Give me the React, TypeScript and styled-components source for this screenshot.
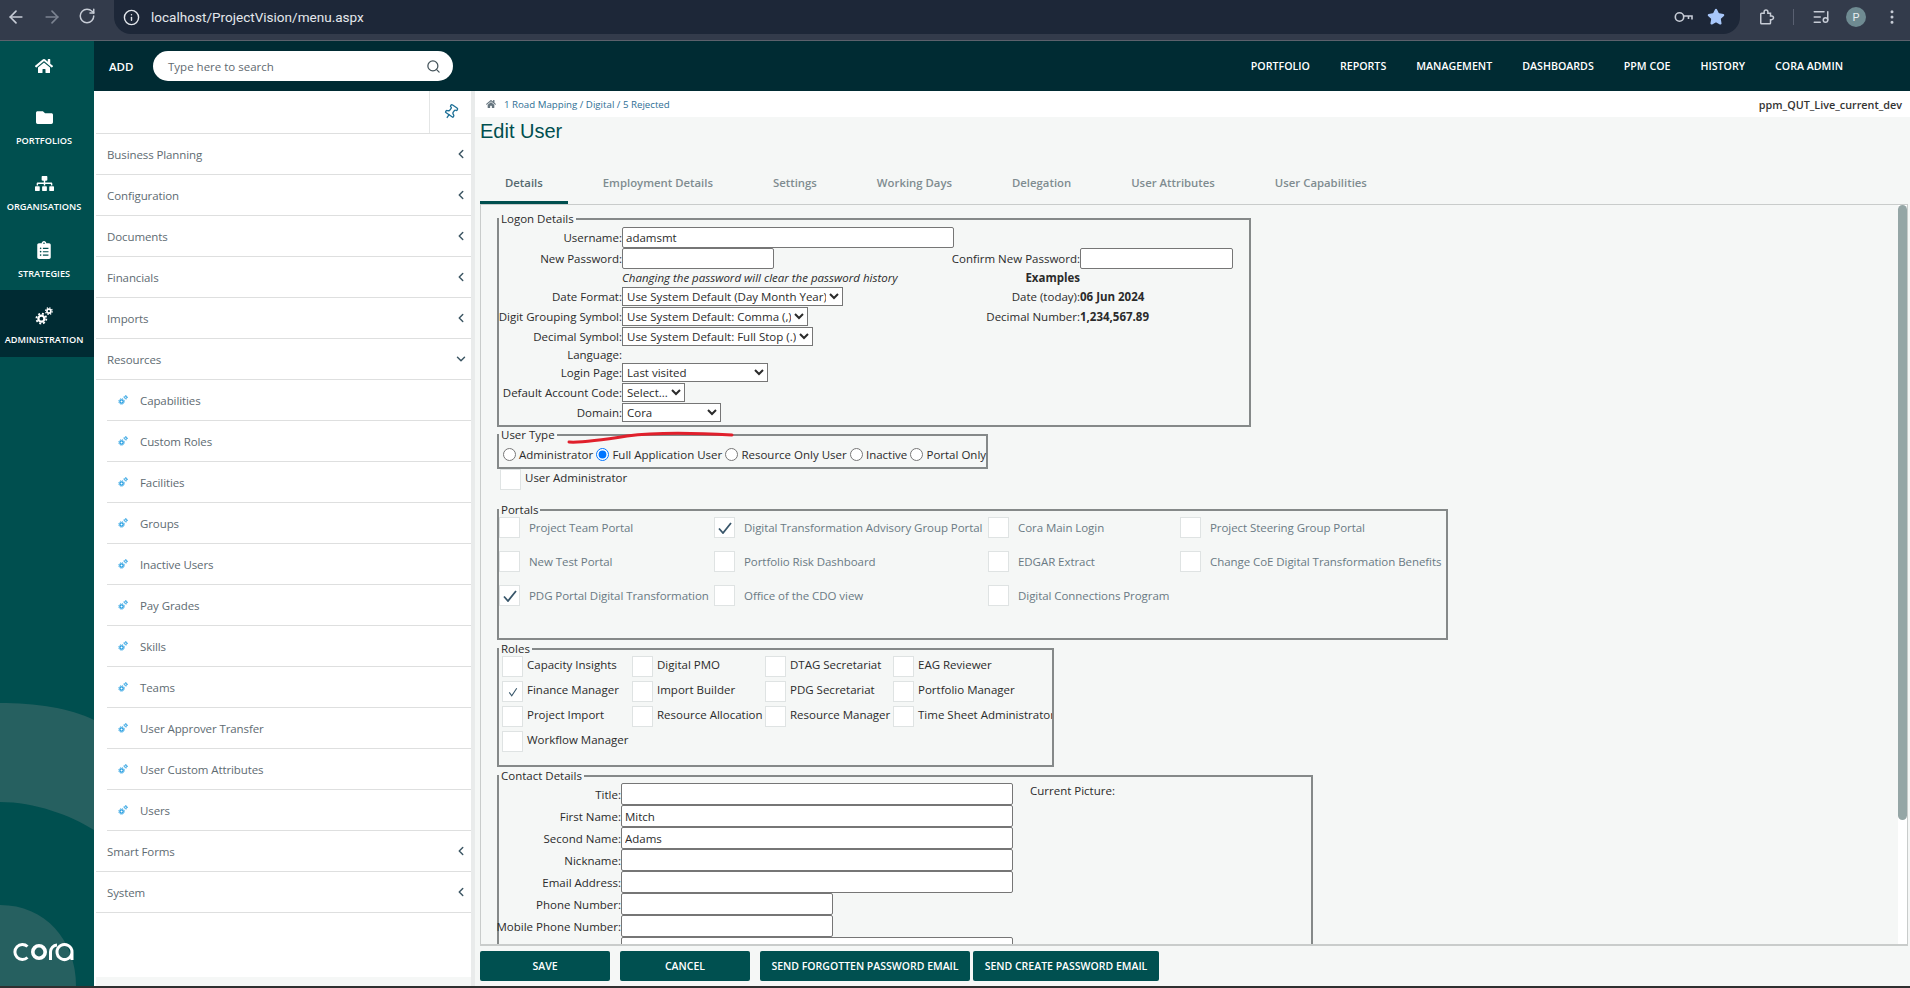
import React from "react";
import styled, { createGlobalStyle } from "styled-components";
import {
  ArrowLeft,
  ArrowRight,
  RotateCw,
  Info,
  Star,
  ListMusic,
  EllipsisVertical,
  Search,
  Pin,
  ChevronLeft,
  ChevronDown,
} from "lucide-react";
import { FaHome, FaFolder, FaSitemap, FaClipboardList } from "react-icons/fa";

const UI = `"Open Sans", "Noto Sans", sans-serif`;

const Global = createGlobalStyle`
  html, body { margin: 0; padding: 0; width: 1910px; height: 988px; overflow: hidden; background: #2f3030; }
  body { font-family: ${UI}; }
  * { box-sizing: border-box; }
`;

const Page = styled.div`
  width: 1910px;
  height: 988px;
  display: flex;
  flex-direction: column;
  overflow: hidden;
`;

/* ---------- browser chrome ---------- */
const ChromeBar = styled.div`
  height: 41px;
  flex: none;
  display: flex;
  align-items: flex-start;
  background: #333b4b;
  border-bottom: 1px solid #5c616c;
  color: #c7ccd6;
`;
const NavButtons = styled.div`
  display: flex;
  gap: 16px;
  padding: 7px 0 0 6px;
  width: 114px;
  flex: none;
`;
const NavIcon = styled.span<{ $dim?: boolean }>`
  display: flex;
  width: 20px;
  height: 20px;
  color: ${(p) => (p.$dim ? "#7c8391" : "#c7ccd6")};
`;
const UrlBar = styled.div`
  width: 1626px;
  flex: none;
  height: 34px;
  background: #1d2738;
  border-radius: 0 0 17px 17px;
  display: flex;
  align-items: center;
  padding: 0 15px 0 9px;
`;
const UrlText = styled.span`
  margin-left: 11px;
  flex: 1;
  font-family: Roboto, sans-serif;
  font-size: 13.55px;
  color: #e4e7ec;
`;
const UrlActions = styled.div`
  display: flex;
  align-items: center;
  gap: 14px;
`;
const ChromeTools = styled.div`
  flex: 1;
  min-width: 0;
  height: 34px;
  display: flex;
  align-items: center;
  padding-left: 17px;
`;
const ToolDivider = styled.span`
  width: 1px;
  height: 16px;
  background: #596071;
  margin: 0 18px;
`;
const Avatar = styled.span`
  width: 20px;
  height: 20px;
  flex: none;
  border-radius: 50%;
  background: #6f8b92;
  color: #e8eef0;
  font-family: Roboto, sans-serif;
  font-size: 11px;
  display: flex;
  align-items: center;
  justify-content: center;
  margin: 0 17px 0 16px;
`;

const Shell = styled.div`
  height: 945px;
  flex: none;
  display: flex;
`;

/* ---------- left rail ---------- */
const Rail = styled.nav`
  width: 94px;
  flex: none;
  position: relative;
  background: #004f4f;
  display: flex;
  flex-direction: column;
  overflow: hidden;
`;
const RailArt = styled.svg`
  position: absolute;
  left: 0;
  top: 0;
`;
const RailHome = styled.div`
  position: relative;
  height: 50px;
  display: flex;
  align-items: center;
  justify-content: center;
  padding: 0 6px 1px 0;
  color: #fff;
`;
const RailItem = styled.div<{ $active?: boolean }>`
  position: relative;
  height: 66.4px;
  display: flex;
  flex-direction: column;
  align-items: center;
  padding: 16px 6px 0 0;
  background: ${(p) => (p.$active ? "#002b33" : "transparent")};
  color: #fff;
`;
const RailIconBox = styled.span`
  height: 20px;
  display: flex;
  align-items: center;
  justify-content: center;
`;
const RailLabel = styled.span`
  margin-top: 8px;
  font-size: 9.2px;
  line-height: 12px;
  font-weight: 600;
  white-space: nowrap;
  color: #fff;
`;
const LogoMark = styled.svg`
  position: absolute;
  left: 13px;
  top: 901px;
`;

/* ---------- right column ---------- */
const Column = styled.div`
  flex: 1;
  display: flex;
  flex-direction: column;
  min-width: 0;
`;
const TopBar = styled.header`
  height: 50px;
  flex: none;
  background: #002b33;
  display: flex;
  align-items: center;
  padding: 0 67px 0 15px;
  color: #fff;
`;
const AddLabel = styled.span`
  font-size: 11.5px;
  font-weight: 600;
  width: 44px;
`;
const SearchBox = styled.div`
  width: 300px;
  height: 30px;
  border-radius: 15px;
  background: #fff;
  display: flex;
  align-items: center;
  justify-content: space-between;
  padding: 0 12px 0 15px;
  font-size: 11.5px;
  color: #5f6a70;
`;
const TopNav = styled.div`
  margin-left: auto;
  display: flex;
  gap: 30px;
  font-size: 10.65px;
  font-weight: 600;
`;
const Body = styled.div`
  flex: 1;
  display: flex;
  min-height: 0;
`;

/* ---------- sidebar ---------- */
const Sidebar = styled.aside`
  width: 377px;
  flex: none;
  background: #fff;
  padding-left: 2px;
  display: flex;
  flex-direction: column;
`;
const SideHead = styled.div`
  height: 43px;
  flex: none;
  display: flex;
  justify-content: flex-end;
  border-bottom: 1px solid #dedfdf;
`;
const PinCell = styled.div`
  width: 42px;
  border-left: 1px solid #e4e6e6;
  display: flex;
  align-items: center;
  justify-content: center;
  color: #1d6f96;
`;
const TiltedPin = styled(Pin)`
  transform: rotate(35deg);
`;
const SideRow = styled.div<{ $sub?: boolean }>`
  height: 41px;
  flex: none;
  margin-left: ${(p) => (p.$sub ? "11px" : "0")};
  padding: 0 3px 0 11px;
  display: flex;
  align-items: center;
  border-bottom: 1px solid #dedfdf;
  font-size: 11.5px;
  letter-spacing: -0.1px;
  color: #5e6b72;
`;
const SubIcon = styled.span`
  width: 10px;
  height: 10px;
  margin-right: 12px;
  display: flex;
  color: #1f9be0;
`;
const RowText = styled.span`
  flex: 1;
`;
const RowChevron = styled.span`
  width: 14px;
  display: flex;
  color: #3c5663;
`;
const SideFoot = styled.div`
  margin-top: auto;
  height: 9px;
  background: #f5f7f6;
`;
const Splitter = styled.div`
  width: 4px;
  flex: none;
  background: #e9ebeb;
`;

/* ---------- main ---------- */
const Main = styled.main`
  flex: 1;
  min-width: 0;
  background: #f5f7f6;
  display: flex;
  flex-direction: column;
`;
const CrumbBar = styled.div`
  height: 26px;
  flex: none;
  background: #fff;
  display: flex;
  align-items: center;
  padding: 0 8px 0 11px;
  color: #66757f;
`;
const Crumbs = styled.span`
  margin-left: 8px;
  font-size: 9.7px;
  color: #2f6f95;
`;
const DbName = styled.span`
  margin-left: auto;
  font-size: 10.8px;
  font-weight: 600;
  color: #333;
`;
const Title = styled.h1`
  margin: 0;
  padding: 2px 0 0 5px;
  height: 46px;
  flex: none;
  font-family: "Liberation Sans", Arial, sans-serif;
  font-size: 20px;
  line-height: 24px;
  font-weight: 400;
  color: #004f4f;
`;
const TabBar = styled.div`
  height: 41px;
  flex: none;
  display: flex;
  gap: 10px;
  padding-left: 5px;
`;
const Tab = styled.div<{ $active?: boolean }>`
  padding: 0 25px;
  height: 41px;
  display: flex;
  align-items: center;
  font-size: 11.35px;
  font-weight: 600;
  white-space: nowrap;
  color: ${(p) => (p.$active ? "#55696f" : "#7f8c90")};
  border-bottom: 3px solid ${(p) => (p.$active ? "#004f4f" : "transparent")};
`;
const Panel = styled.section`
  height: 742px;
  flex: none;
  margin: 0 2px 0 5px;
  border: 1px solid #c9cccb;
  border-bottom-width: 2px;
  border-top-width: 1px;
  display: flex;
  min-height: 0;
`;
const FormScroll = styled.div`
  flex: 1;
  min-width: 0;
  overflow: hidden;
  padding: 6px 0 0 16px;
  font-size: 11.5px;
  color: #2b2b2b;
`;
const Track = styled.div`
  width: 9px;
  flex: none;
  background: #fff;
`;
const Thumb = styled.div`
  height: 615px;
  background: #95a6a6;
  border-radius: 5px;
`;

const Group = styled.fieldset<{ $w: number }>`
  position: relative;
  width: ${(p) => p.$w}px;
  margin: 0;
  padding: 0;
  border: 2px solid #858989;
  min-width: 0;
`;
const GroupTitle = styled.legend`
  padding: 0 2px;
  margin-left: 0;
  font-size: 11.5px;
  line-height: 15px;
  color: #2b2b2b;
`;
const Scribble = styled.svg`
  position: absolute;
  left: 68px;
  top: -11px;
`;

const LogonGrid = styled.div`
  display: grid;
  grid-template-columns: 123px 332px 126px 153px;
  grid-template-rows: 22px 21px 17px 20px 20px 20px 16px 20px 20px 20px;
  padding-bottom: 3px;
  align-items: center;
`;
const Label = styled.label`
  justify-self: end;
  text-align: right;
  white-space: nowrap;
`;
const BoldLabel = styled(Label)`
  font-weight: 700;
`;
const Value = styled.span`
  font-weight: 700;
  white-space: nowrap;
`;
const Note = styled.span`
  font-style: italic;
  white-space: nowrap;
`;
const TextInput = styled.input<{ $w: number }>`
  display: block;
  width: ${(p) => p.$w}px;
  height: 21px;
  padding: 0 3px;
  border: 1px solid #767676;
  border-radius: 2px;
  background: #fff;
  font-family: ${UI};
  font-size: 11.5px;
  color: #2b2b2b;
  outline: none;
`;
const ContactInput = styled(TextInput)`
  height: 22px;
`;
const Select = styled.select<{ $w: number }>`
  display: block;
  width: ${(p) => p.$w}px;
  height: 19px;
  padding: 0;
  border: 1px solid #767676;
  border-radius: 0;
  background-color: #fff;
  font-family: ${UI};
  font-size: 11.5px;
  color: #2b2b2b;
`;

const RadioRow = styled.div`
  height: 25px;
  display: flex;
  align-items: center;
  padding-left: 4px;
  gap: 3.2px;
  white-space: nowrap;
`;
const RadioOption = styled.label`
  display: flex;
  align-items: center;
  gap: 3px;
`;
const Radio = styled.input`
  margin: 0;
  width: 13px;
  height: 13px;
`;

const Box = styled.span`
  width: 21px;
  height: 21px;
  flex: none;
  background: #fff;
  border: 1px solid #dfe3e3;
  display: flex;
  align-items: center;
  justify-content: center;
  color: #38566a;
`;
const StandaloneCheck = styled.div`
  height: 33px;
  padding-left: 3px;
  display: flex;
  gap: 4px;
  line-height: 17px;
`;
const PortalGrid = styled.div`
  display: grid;
  grid-template-columns: 215px 274px 192px 1fr;
  grid-auto-rows: 34px;
  height: 121px;
`;
const PortalItem = styled.div`
  display: flex;
  gap: 9px;
  line-height: 21px;
  letter-spacing: -0.06px;
  white-space: nowrap;
  color: #6a7a84;
`;
const RolesGrid = styled.div`
  display: grid;
  grid-template-columns: 130px 133px 128px 1fr;
  grid-auto-rows: 25px;
  padding-left: 3px;
  height: 109px;
`;
const RoleItem = styled.div`
  display: flex;
  gap: 4px;
  line-height: 17px;
  white-space: nowrap;
  overflow: hidden;
`;
const Stack = styled.div<{ $top: number }>`
  margin-top: ${(p) => p.$top}px;
`;
const ContactGrid = styled.div`
  display: grid;
  grid-template-columns: 122px 409px 1fr;
  grid-auto-rows: 22px;
  align-items: center;
`;
const PictureLabel = styled.span`
  align-self: start;
  line-height: 16px;
`;
const ButtonBar = styled.footer`
  flex: 1;
  display: flex;
  align-items: flex-start;
  gap: 10px;
  padding: 5px 0 0 5px;
`;
const ButtonPair = styled.div`
  display: flex;
  gap: 3px;
`;
const ActionButton = styled.button<{ $w: number }>`
  width: ${(p) => p.$w}px;
  height: 30px;
  border: 0;
  border-radius: 2px;
  padding: 0;
  background: #005050;
  color: #fff;
  font-family: ${UI};
  font-size: 10.5px;
  font-weight: 600;
  white-space: nowrap;
`;

const Gears = ({ size }: { size: number }) => (
  <svg width={size} height={size} viewBox="0 0 24 24" fill="none" stroke="currentColor">
    <circle cx="8.5" cy="15.5" r="4" strokeWidth="3" />
    <circle cx="8.5" cy="15.5" r="6.6" strokeWidth="2.4" strokeDasharray="2.6 2.58" />
    <circle cx="18.5" cy="5.5" r="2.6" strokeWidth="2.2" />
    <circle cx="18.5" cy="5.5" r="4.4" strokeWidth="1.8" strokeDasharray="1.75 1.71" />
  </svg>
);

const Tick = ({ small }: { small?: boolean }) =>
  small ? (
    <svg width="10" height="10" viewBox="0 0 12 12" fill="none" stroke="currentColor" strokeWidth="1.3">
      <path d="M1.5 6.5 4.5 10.5 10.5 1.5" />
    </svg>
  ) : (
    <svg width="14" height="12" viewBox="0 0 14 12" fill="none" stroke="currentColor" strokeWidth="1.8">
      <path d="M1 6.5 5 11 13 1" />
    </svg>
  );

const KeyIcon = () => (
  <svg width="19" height="12" viewBox="0 0 19 12" fill="none" stroke="#c7ccd6" strokeWidth="1.6">
    <circle cx="5.5" cy="6" r="4.2" />
    <path d="M9.7 5H18V8.5M14.5 5V8" />
  </svg>
);

const ExtensionIcon = () => (
  <svg width="18" height="18" viewBox="0 0 24 24" fill="none" stroke="#c7ccd6" strokeWidth="2">
    <path d="M6 7h3.5V5a2.5 2.5 0 0 1 5 0v2H18v3.5h1.5a2.5 2.5 0 0 1 0 5H18V20a1 1 0 0 1-1 1H6a1 1 0 0 1-1-1V8a1 1 0 0 1 1-1z" />
  </svg>
);

const topMenu = ["PORTFOLIO", "REPORTS", "MANAGEMENT", "DASHBOARDS", "PPM COE", "HISTORY", "CORA ADMIN"];
const groupsA = ["Business Planning", "Configuration", "Documents", "Financials", "Imports"];
const subs = [
  "Capabilities",
  "Custom Roles",
  "Facilities",
  "Groups",
  "Inactive Users",
  "Pay Grades",
  "Skills",
  "Teams",
  "User Approver Transfer",
  "User Custom Attributes",
  "Users",
];
const tabs = ["Details", "Employment Details", "Settings", "Working Days", "Delegation", "User Attributes", "User Capabilities"];
const portals: [string, boolean][] = [
  ["Project Team Portal", false],
  ["Digital Transformation Advisory Group Portal", true],
  ["Cora Main Login", false],
  ["Project Steering Group Portal", false],
  ["New Test Portal", false],
  ["Portfolio Risk Dashboard", false],
  ["EDGAR Extract", false],
  ["Change CoE Digital Transformation Benefits", false],
  ["PDG Portal Digital Transformation", true],
  ["Office of the CDO view", false],
  ["Digital Connections Program", false],
];
const roles: [string, boolean][] = [
  ["Capacity Insights", false],
  ["Digital PMO", false],
  ["DTAG Secretariat", false],
  ["EAG Reviewer", false],
  ["Finance Manager", true],
  ["Import Builder", false],
  ["PDG Secretariat", false],
  ["Portfolio Manager", false],
  ["Project Import", false],
  ["Resource Allocation", false],
  ["Resource Manager", false],
  ["Time Sheet Administrator", false],
  ["Workflow Manager", false],
];
const contacts: [string, string, number][] = [
  ["Title:", "", 392],
  ["First Name:", "Mitch", 392],
  ["Second Name:", "Adams", 392],
  ["Nickname:", "", 392],
  ["Email Address:", "", 392],
  ["Phone Number:", "", 212],
  ["Mobile Phone Number:", "", 212],
  ["Source Shield:", "", 392],
];
const userTypes = ["Administrator", "Full Application User", "Resource Only User", "Inactive", "Portal Only"];

const Picker = ({ w, value }: { w: number; value: string }) => (
  <Select $w={w} defaultValue={value}>
    <option>{value}</option>
  </Select>
);

export default function App() {
  return (
    <Page>
      <Global />
      <ChromeBar>
        <NavButtons>
          <NavIcon><ArrowLeft size={20} /></NavIcon>
          <NavIcon $dim><ArrowRight size={20} /></NavIcon>
          <NavIcon><RotateCw size={18} /></NavIcon>
        </NavButtons>
        <UrlBar>
          <Info size={17} color="#e4e7ec" />
          <UrlText>localhost/ProjectVision/menu.aspx</UrlText>
          <UrlActions>
            <KeyIcon />
            <Star size={18} color="#a8c7fa" fill="#a8c7fa" />
          </UrlActions>
        </UrlBar>
        <ChromeTools>
          <ExtensionIcon />
          <ToolDivider />
          <ListMusic size={18} />
          <Avatar>P</Avatar>
          <EllipsisVertical size={18} />
        </ChromeTools>
      </ChromeBar>

      <Shell>
        <Rail>
          <RailArt width="94" height="945" viewBox="0 0 94 945" aria-hidden="true">
            <path d="M0 662C35 662 70 667 94 679V789C70 774 35 761 0 761Z" fill="#266060" />
            <path d="M0 864C45 864 76 899 76 945H0Z" fill="#266060" />
          </RailArt>
          <RailHome><FaHome size={18} /></RailHome>
          <RailItem>
            <RailIconBox><FaFolder size={17} /></RailIconBox>
            <RailLabel>PORTFOLIOS</RailLabel>
          </RailItem>
          <RailItem>
            <RailIconBox><FaSitemap size={19} /></RailIconBox>
            <RailLabel>ORGANISATIONS</RailLabel>
          </RailItem>
          <RailItem>
            <RailIconBox><FaClipboardList size={18} /></RailIconBox>
            <RailLabel>STRATEGIES</RailLabel>
          </RailItem>
          <RailItem $active>
            <RailIconBox><Gears size={18} /></RailIconBox>
            <RailLabel>ADMINISTRATION</RailLabel>
          </RailItem>
          <LogoMark width="62" height="20" viewBox="0 0 62 20" fill="none" stroke="#fff" strokeWidth="3" role="img" aria-label="cora">
            <path d="M14.5 4.5A7.5 7.5 0 1 0 14.5 15.5" />
            <circle cx="26" cy="10" r="6.2" strokeWidth="3.6" />
            <path d="M37.5 18V10A7 7 0 0 1 44 3" />
            <path d="M59 10A7.5 7.5 0 1 0 59 10.1V18" />
          </LogoMark>
        </Rail>

        <Column>
          <TopBar>
            <AddLabel>ADD</AddLabel>
            <SearchBox>
              Type here to search
              <Search size={15} color="#44535a" />
            </SearchBox>
            <TopNav>
              {topMenu.map((m) => (
                <span key={m}>{m}</span>
              ))}
            </TopNav>
          </TopBar>
          <Body>
            <Sidebar>
              <SideHead>
                <PinCell><TiltedPin size={16} /></PinCell>
              </SideHead>
              {groupsA.map((g) => (
                <SideRow key={g}>
                  <RowText>{g}</RowText>
                  <RowChevron><ChevronLeft size={14} strokeWidth={2.5} /></RowChevron>
                </SideRow>
              ))}
              <SideRow>
                <RowText>Resources</RowText>
                <RowChevron><ChevronDown size={14} strokeWidth={2.5} /></RowChevron>
              </SideRow>
              {subs.map((s) => (
                <SideRow $sub key={s}>
                  <SubIcon><Gears size={10} /></SubIcon>
                  <RowText>{s}</RowText>
                </SideRow>
              ))}
              <SideRow>
                <RowText>Smart Forms</RowText>
                <RowChevron><ChevronLeft size={14} strokeWidth={2.5} /></RowChevron>
              </SideRow>
              <SideRow>
                <RowText>System</RowText>
                <RowChevron><ChevronLeft size={14} strokeWidth={2.5} /></RowChevron>
              </SideRow>
              <SideFoot />
            </Sidebar>
            <Splitter />
            <Main>
              <CrumbBar>
                <FaHome size={10} />
                <Crumbs>1 Road Mapping / Digital / 5 Rejected</Crumbs>
                <DbName>ppm_QUT_Live_current_dev</DbName>
              </CrumbBar>
              <Title>Edit User</Title>
              <TabBar>
                {tabs.map((t, i) => (
                  <Tab key={t} $active={i === 0}>{t}</Tab>
                ))}
              </TabBar>
              <Panel>
                <FormScroll>
                  <Group $w={754}>
                    <GroupTitle>Logon Details</GroupTitle>
                    <LogonGrid>
                      <Label>Username:</Label>
                      <TextInput $w={332} defaultValue="adamsmt" />
                      <span />
                      <span />
                      <Label>New Password:</Label>
                      <TextInput $w={152} />
                      <Label>Confirm New Password:</Label>
                      <TextInput $w={153} />
                      <span />
                      <Note>Changing the password will clear the password history</Note>
                      <BoldLabel>Examples</BoldLabel>
                      <span />
                      <Label>Date Format:</Label>
                      <Picker w={221} value="Use System Default (Day Month Year)" />
                      <Label>Date (today):</Label>
                      <Value>06 Jun 2024</Value>
                      <Label>Digit Grouping Symbol:</Label>
                      <Picker w={186} value="Use System Default: Comma (,)" />
                      <Label>Decimal Number:</Label>
                      <Value>1,234,567.89</Value>
                      <Label>Decimal Symbol:</Label>
                      <Picker w={191} value="Use System Default: Full Stop (.)" />
                      <span />
                      <span />
                      <Label>Language:</Label>
                      <span />
                      <span />
                      <span />
                      <Label>Login Page:</Label>
                      <Picker w={146} value="Last visited" />
                      <span />
                      <span />
                      <Label>Default Account Code:</Label>
                      <Picker w={63} value="Select..." />
                      <span />
                      <span />
                      <Label>Domain:</Label>
                      <Picker w={99} value="Cora" />
                      <span />
                      <span />
                    </LogonGrid>
                  </Group>

                  <Group $w={491}>
                    <Scribble
                      width="168"
                      height="14"
                      viewBox="0 0 168 14"
                      fill="none"
                      stroke="#e0202c"
                      strokeWidth="3"
                      strokeLinecap="round"
                    >
                      <path d="M2 11C15 12 35 9 60 5C90 1 130 2 165 4" />
                    </Scribble>
                    <GroupTitle>User Type</GroupTitle>
                    <RadioRow>
                      {userTypes.map((u, i) => (
                        <RadioOption key={u}>
                          <Radio type="radio" name="utype" defaultChecked={i === 1} />
                          {u}
                        </RadioOption>
                      ))}
                    </RadioRow>
                  </Group>

                  <StandaloneCheck>
                    <Box />
                    User Administrator
                  </StandaloneCheck>

                  <Group $w={951}>
                    <GroupTitle>Portals</GroupTitle>
                    <PortalGrid>
                      {portals.map(([name, on]) => (
                        <PortalItem key={name}>
                          <Box>{on && <Tick />}</Box>
                          {name}
                        </PortalItem>
                      ))}
                    </PortalGrid>
                  </Group>

                  <Stack $top={1}>
                    <Group $w={557}>
                      <GroupTitle>Roles</GroupTitle>
                      <RolesGrid>
                        {roles.map(([name, on]) => (
                          <RoleItem key={name}>
                            <Box>{on && <Tick small />}</Box>
                            {name}
                          </RoleItem>
                        ))}
                      </RolesGrid>
                    </Group>
                  </Stack>

                  <Stack $top={1}>
                    <Group $w={816}>
                      <GroupTitle>Contact Details</GroupTitle>
                      <ContactGrid>
                        {contacts.map(([label, value, w], i) => (
                          <React.Fragment key={label}>
                            <Label>{label}</Label>
                            <ContactInput $w={w} defaultValue={value} />
                            {i === 0 ? <PictureLabel>Current Picture:</PictureLabel> : <span />}
                          </React.Fragment>
                        ))}
                      </ContactGrid>
                    </Group>
                  </Stack>
                </FormScroll>
                <Track><Thumb /></Track>
              </Panel>
              <ButtonBar>
                <ActionButton $w={130}>SAVE</ActionButton>
                <ActionButton $w={130}>CANCEL</ActionButton>
                <ButtonPair>
                  <ActionButton $w={210}>SEND FORGOTTEN PASSWORD EMAIL</ActionButton>
                  <ActionButton $w={186}>SEND CREATE PASSWORD EMAIL</ActionButton>
                </ButtonPair>
              </ButtonBar>
            </Main>
          </Body>
        </Column>
      </Shell>
    </Page>
  );
}
